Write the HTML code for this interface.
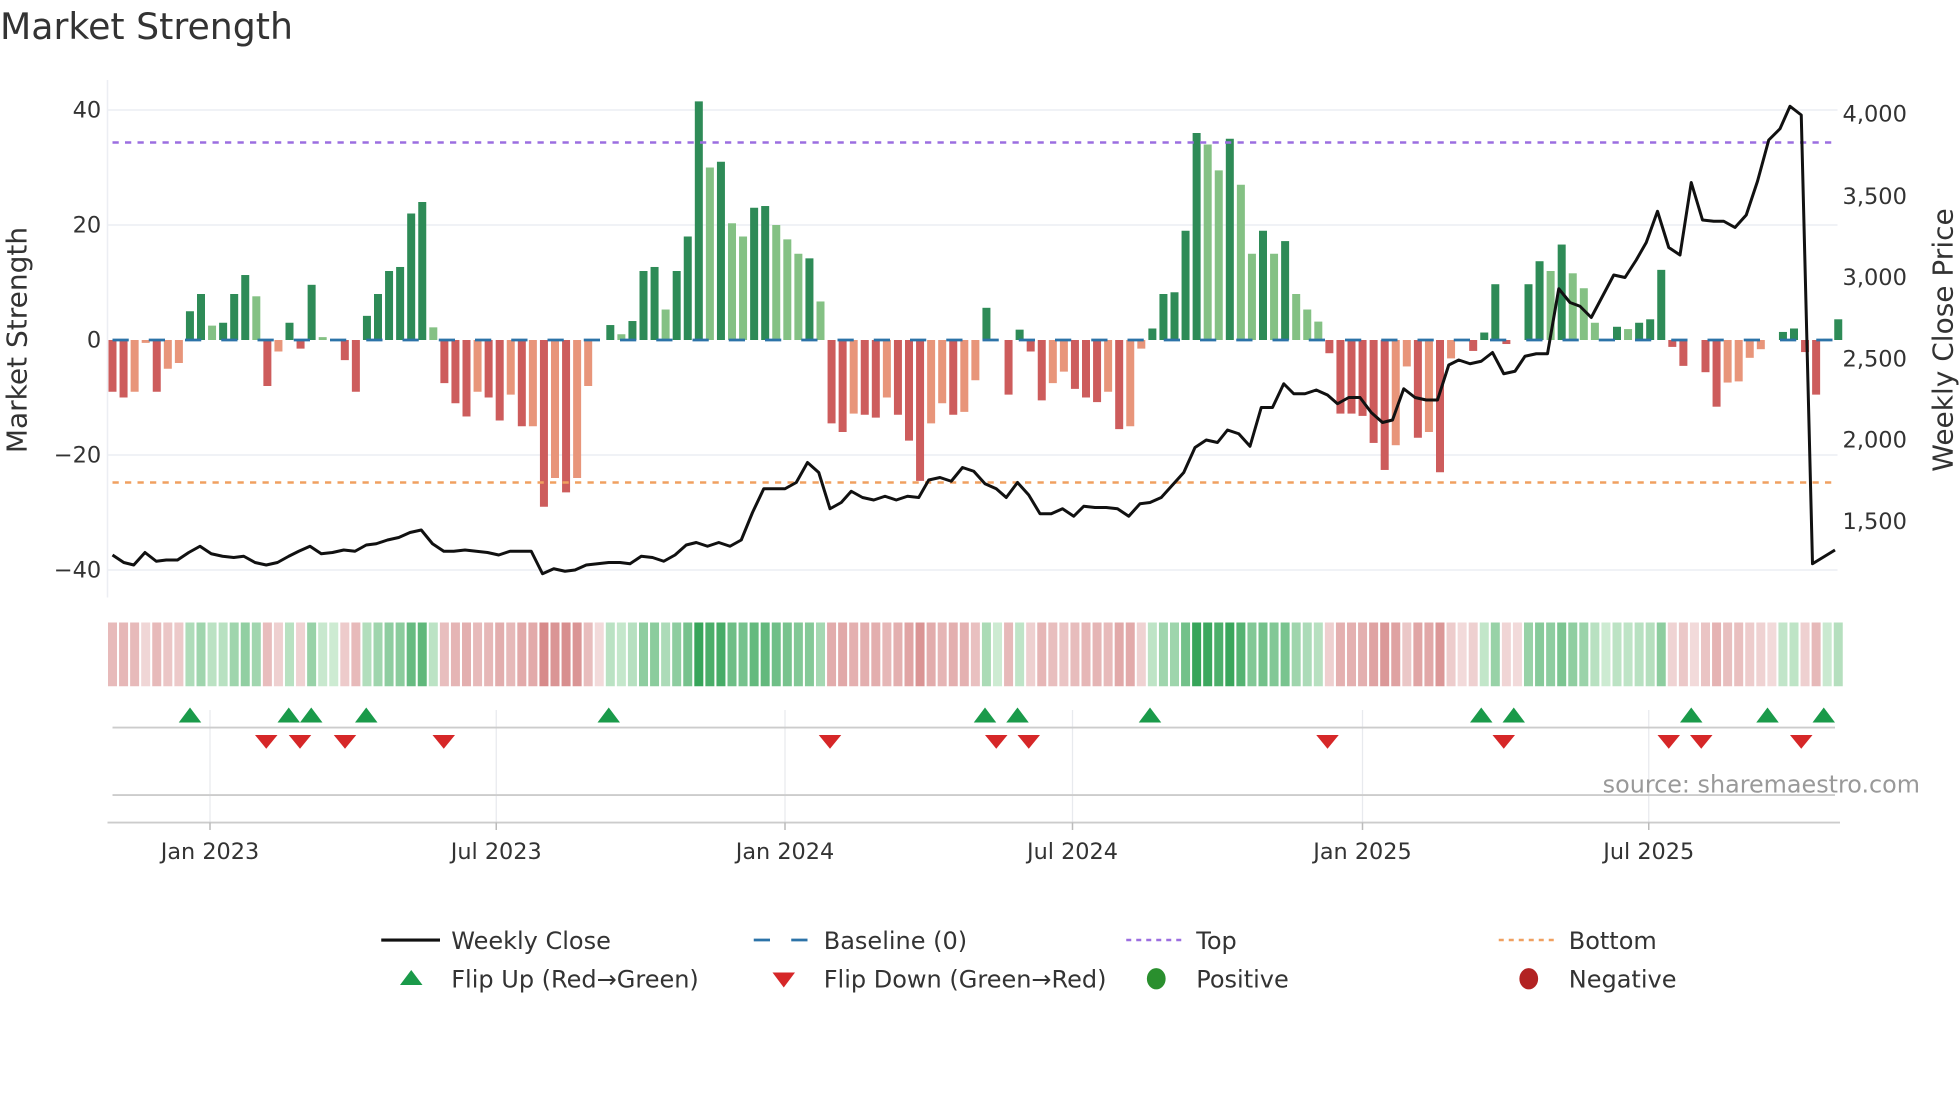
<!DOCTYPE html>
<html><head><meta charset="utf-8">
<style>
html,body{margin:0;padding:0;background:#fff;}
svg{display:block;font-family:"DejaVu Sans","Liberation Sans",sans-serif;}
</style></head>
<body>
<svg id="s" width="1960" height="1102" viewBox="0 0 1568 881.6" xmlns="http://www.w3.org/2000/svg">
<rect width="1568" height="882" fill="#fff"/>
<text x="0" y="31" font-size="29" fill="#333">Market Strength</text>
<g stroke="#eceef3" stroke-width="1.2">
<line x1="86" y1="88" x2="1470" y2="88"/>
<line x1="86" y1="180" x2="1470" y2="180"/>
<line x1="86" y1="364" x2="1470" y2="364"/>
<line x1="86" y1="456" x2="1470" y2="456"/>
</g>
<line x1="86" y1="64" x2="86" y2="478" stroke="#eceef3" stroke-width="1.2"/>
<g font-size="18" fill="#333" text-anchor="end">
<text x="81" y="94">40</text><text x="81" y="186">20</text><text x="81" y="278">0</text>
<text x="81" y="370">−20</text><text x="81" y="462">−40</text>
</g>
<text transform="translate(21,272) rotate(-90)" font-size="22.4" fill="#333" text-anchor="middle">Market Strength</text>
<g font-size="18" fill="#333">
<text x="1474" y="97">4,000</text><text x="1474" y="163">3,500</text><text x="1474" y="228">3,000</text>
<text x="1474" y="293">2,500</text><text x="1474" y="358">2,000</text><text x="1474" y="423">1,500</text>
</g>
<text transform="translate(1562,272) rotate(-90)" font-size="22.4" fill="#333" text-anchor="middle">Weekly Close Price</text>
<g id="bars"></g>
<line x1="90" y1="114" x2="1470" y2="114" stroke="#9b6ee0" stroke-width="2" stroke-dasharray="5,5"/>
<line x1="90" y1="386" x2="1470" y2="386" stroke="#f0a060" stroke-width="2" stroke-dasharray="5,5"/>
<line x1="90" y1="272" x2="1470" y2="272" stroke="#2c73a8" stroke-width="2.2" stroke-dasharray="13,16"/>
<polyline id="price" fill="none" stroke="#111" stroke-width="2.4" stroke-linejoin="round"/>
<g id="heat"></g>
<g stroke="#e8eaee" stroke-width="1">
<line x1="168" y1="568" x2="168" y2="658"/><line x1="397" y1="568" x2="397" y2="658"/>
<line x1="628" y1="568" x2="628" y2="658"/><line x1="858" y1="568" x2="858" y2="658"/>
<line x1="1090" y1="568" x2="1090" y2="658"/><line x1="1319" y1="568" x2="1319" y2="658"/>
</g>
<line x1="90" y1="582" x2="1468" y2="582" stroke="#ccc" stroke-width="1.5"/>
<line x1="90" y1="636" x2="1468" y2="636" stroke="#ccc" stroke-width="1.5"/>
<line x1="86" y1="658" x2="1472" y2="658" stroke="#ccc" stroke-width="1.5"/>
<g stroke="#bbb" stroke-width="1.2">
<line x1="168" y1="658" x2="168" y2="664"/><line x1="397" y1="658" x2="397" y2="664"/>
<line x1="628" y1="658" x2="628" y2="664"/><line x1="858" y1="658" x2="858" y2="664"/>
<line x1="1090" y1="658" x2="1090" y2="664"/><line x1="1319" y1="658" x2="1319" y2="664"/>
</g>
<g id="marks"></g>
<text x="1536" y="634" font-size="19.1" fill="#999" text-anchor="end">source: sharemaestro.com</text>
<g font-size="17.9" fill="#333" text-anchor="middle">
<text x="168" y="687">Jan 2023</text><text x="397" y="687">Jul 2023</text><text x="628" y="687">Jan 2024</text>
<text x="858" y="687">Jul 2024</text><text x="1090" y="687">Jan 2025</text><text x="1319" y="687">Jul 2025</text>
</g>
<g font-size="19.2" fill="#333">
<line x1="305" y1="752" x2="352" y2="752" stroke="#111" stroke-width="2.5"/>
<text x="361" y="759">Weekly Close</text>
<line x1="603" y1="752" x2="646" y2="752" stroke="#2c73a8" stroke-width="2.2" stroke-dasharray="13,17"/>
<text x="659" y="759">Baseline (0)</text>
<line x1="901" y1="752" x2="945" y2="752" stroke="#9b6ee0" stroke-width="2" stroke-dasharray="4,4"/>
<text x="957" y="759">Top</text>
<line x1="1199" y1="752" x2="1243" y2="752" stroke="#f0a060" stroke-width="2" stroke-dasharray="4,4"/>
<text x="1255" y="759">Bottom</text>
<polygon points="320,788 338,788 329,776" fill="#1a9a4a"/>
<text x="361" y="790">Flip Up (Red→Green)</text>
<polygon points="618,778 636,778 627,790" fill="#d62728"/>
<text x="659" y="790">Flip Down (Green→Red)</text>
<ellipse cx="925" cy="783" rx="7.5" ry="8.5" fill="#2a8f2e"/>
<text x="957" y="790">Positive</text>
<ellipse cx="1223" cy="783" rx="7.5" ry="8.5" fill="#b22222"/>
<text x="1255" y="790">Negative</text>
</g>
</svg>
<script>
var V=[-9,-10,-9,-0.5,-9,-5,-4,5,8,2.5,3,8,11.3,7.6,-8,-2,3,-1.5,9.6,0.5,0,-3.5,-9,4.2,8,12,12.7,22,24,2.2,-7.5,-11,-13.3,-9,-10,-14,-9.5,-15,-15,-29,-24,-26.5,-24,-8,0,2.6,1,3.3,12,12.7,5.3,12,18,41.5,30,31,20.3,18,23,23.3,20,17.5,15,14.2,6.7,-14.5,-16,-12.8,-13,-13.5,-10,-13,-17.5,-24.5,-14.5,-11,-13,-12.5,-7,5.6,0,-9.5,
1.8,-2,-10.5,-7.5,-5.5,-8.5,-10,-10.8,-9,-15.5,-15,-1.5,2,8,8.3,19,36,34,29.5,35,27,15,19,15,17.2,8,5.3,3.2,
-2.3,-12.8,-12.8,-13.2,-17.9,-22.6,-18.3,-4.6,-17,-16,-23,-3.2,0,-1.9,1.3,9.7,-0.7,0,9.7,13.7,12,16.6,11.6,9,3,0,2.3,1.9,3,3.6,12.2,-1.2,-4.5,0,-5.6,-11.6,-7.4,-7.2,-3.1,-1.6,0,1.4,2,-2.1,-9.5,0.2,3.6];
var S="RRSSRSSDDLDDDLRSDRDLXRRDDDDDDLRRRSRRSRSRSRSSXDLDDDLDDDLDLLDDLLLDLRRSRRSRRRSSRSSDXR"+
"DRRSSRRRSRSSDDDDDLLDLLDLDLLL"+
"RRRRRRSSRSRSXRDDRXDDLDLLLXDLDDDRRXRRSSSSXDDRRLD";
var NS="http://www.w3.org/2000/svg";
function el(t,a,p){var e=document.createElementNS(NS,t);for(var k in a)e.setAttribute(k,a[k]);document.getElementById(p).appendChild(e);return e;}
var col={D:"#2e8b57",L:"#84c184",R:"#cd5c5c",S:"#e8957a"};
var last=-1;
for(var i=0;i<V.length;i++){
 var x=90+i*8.85,v=V[i],c=S[i]||"X";
 if(v!==0&&c!=="X"){var y0=272,y1=272-v*4.6;
  el("rect",{x:(x-3.2).toFixed(2),y:Math.min(y0,y1).toFixed(2),width:6.4,height:Math.abs(y1-y0).toFixed(2),fill:col[c]},"bars");}
 var sg=v>0?1:(v<0?-1:last); if(v!==0)last=sg;
 var t=Math.pow(Math.min(1,Math.abs(v)/36),0.8);
 var r,g,b;
 if(sg>0){r=205-150*t;g=235-70*t;b=210-120*t;}else{r=242-32*t;g=218-95*t;b=218-95*t;}
 el("rect",{x:(x-3.6).toFixed(2),y:498,width:7.2,height:51,fill:"rgb("+(r|0)+","+(g|0)+","+(b|0)+")"},"heat");
}
var P=[[90,444],[99,450],[107,452],[116,442],[125,449],[133,448],[142,448],[151,442],[160,437],[169,443],[178,445],[187,446],[195,445],[204,450],[213,452],[222,450],[231,445],[239,441],[248,437],[257,443],[266,442],[275,440],[284,441],[293,436],[301,435],[310,432],[319,430],[328,426],[337,424],[346,435],[355,441],[363,441],[372,440],[381,441],[390,442],[399,444],[408,441],[416,441],[425,441],[434,459],[443,455],[452,457],[460,456],[469,452],[478,451],[487,450],[496,450],[504,451],[513,445],[522,446],[531,449],[540,444],[549,436],[557,434],[566,437],[575,434],[584,437],[593,432],[602,410],[611,391],[619,391],[628,391],[637,386],[646,370],[655,378],[664,407],[673,402],[681,393],[690,398],[699,400],[708,397],[717,400],[726,397],[735,398],[743,384],[752,382],[761,385],[770,374],[779,377],[788,387],[797,391],[805,398],[814,386],[823,396],[832,411],[841,411],[850,407],[859,413],[867,405],[876,406],[885,406],[894,407],[903,413],[912,403],[920,402],[929,398],[938,388],[947,378],[956,358],[965,352],[974,354],[982,344],[991,347],[1000,357],[1009,326],[1018,326],[1027,307],[1035,315],[1044,315],[1053,312],[1062,316],[1070,323],[1079,318],[1088,318],[1097,330],[1106,338],[1114,336],[1123,311],[1132,318],[1141,320],[1150,320],[1159,292],[1167,288],[1176,291],[1185,289],[1194,282],[1203,299],[1212,297],[1220,285],[1229,283],[1238,283],[1247,231],[1256,242],[1264,245],[1273,254],[1282,237],[1291,220],[1300,222],[1309,208],[1317,194],[1326,169],[1335,198],[1344,204],[1353,146],[1362,176],[1371,177],[1379,177],[1388,182],[1397,172],[1406,145],[1415,112],[1424,103],[1432,85],[1441,92],[1450,451],[1468,440]];
document.getElementById("price").setAttribute("points",P.map(function(p){return p.join(",")}).join(" "));
[152,231,249,293,487,788,814,920,1185,1211,1353,1414,1459].forEach(function(x){
 el("polygon",{points:(x-9)+",578 "+(x+9)+",578 "+x+",566",fill:"#1a9a4a"},"marks");});
[213,240,276,355,664,797,823,1062,1203,1335,1361,1441].forEach(function(x){
 el("polygon",{points:(x-9)+",588 "+(x+9)+",588 "+x+",599",fill:"#d62728"},"marks");});
</script>
</body></html>
